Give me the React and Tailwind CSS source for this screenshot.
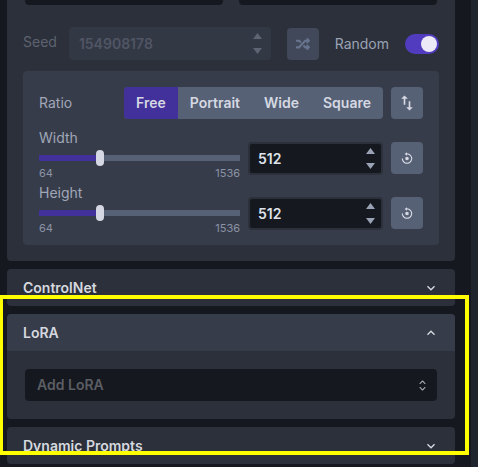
import { useState } from "react";
import { FaRandom } from "react-icons/fa";
import { MdOutlineSwapVert } from "react-icons/md";
import { BiReset } from "react-icons/bi";

function Chevron({ up }) {
  return (
    <svg viewBox="0 0 24 24" className={`size-4 fill-[#d5d8df] ${up ? "rotate-180" : ""}`} aria-hidden="true">
      <path d="M16.59 8.59L12 13.17 7.41 8.59 6 10l6 6 6-6z" />
    </svg>
  );
}

function Steppers({ label, onStep, disabled }) {
  return (
    <div className="flex w-[22px] flex-col">
      <button type="button" aria-label={`Increase ${label}`} disabled={disabled} onClick={() => onStep(1)} className="flex flex-1 items-center justify-center">
        <svg viewBox="0 0 9 6" className="h-1.5 w-[9px] fill-current" aria-hidden="true"><path d="M4.5 0L9 6H0z" /></svg>
      </button>
      <button type="button" aria-label={`Decrease ${label}`} disabled={disabled} onClick={() => onStep(-1)} className="flex flex-1 items-center justify-center">
        <svg viewBox="0 0 9 6" className="h-1.5 w-[9px] fill-current" aria-hidden="true"><path d="M4.5 6L9 0H0z" /></svg>
      </button>
    </div>
  );
}

function Dimension({ label }) {
  const [value, setValue] = useState(512);
  const id = label.toLowerCase();
  const min = 64;
  const max = 1536;
  return (
    <div className="flex items-end gap-2">
      <div className="flex min-w-0 flex-1 flex-col">
        <label htmlFor={id} className="text-sm leading-5 text-[#a0a7b8]">{label}</label>
        <div className="grid h-5 items-center">
          <div className="col-start-1 row-start-1 h-1.5 bg-[#566175]">
            <div className="h-full bg-[#42309b]" style={{ width: `${((value - min) / (max - min)) * 100}%` }} />
          </div>
          <input
            id={id}
            type="range"
            min={min}
            max={max}
            step={8}
            value={value}
            onChange={(e) => setValue(Number(e.target.value))}
            className="z-10 col-start-1 row-start-1 -mx-1 h-4 appearance-none bg-transparent [&::-webkit-slider-thumb]:h-4 [&::-webkit-slider-thumb]:w-2 [&::-webkit-slider-thumb]:appearance-none [&::-webkit-slider-thumb]:rounded-sm [&::-webkit-slider-thumb]:bg-[#d5d8e2]"
          />
        </div>
        <div className="flex justify-between text-[11px] leading-[11px] text-[#8b93a6]">
          <span>{min}</span>
          <span>{max}</span>
        </div>
      </div>
      <div className="mb-1 flex h-[33px] w-[135px] rounded-sm border-2 border-[#2c303a] bg-[#15181f] text-[#9aa3b5]">
        <input
          aria-label={`${label} value`}
          inputMode="numeric"
          value={value}
          onChange={(e) => setValue(Number(e.target.value) || min)}
          className="min-w-0 flex-1 bg-transparent pl-2 text-sm font-semibold text-[#dfe2ea] outline-none"
        />
        <Steppers label={label} onStep={(d) => setValue((v) => v + d * 8)} />
      </div>
      <button type="button" aria-label={`Reset ${label}`} onClick={() => setValue(512)} className="mb-[5px] flex size-8 items-center justify-center rounded bg-[#566175] text-[#d5d8e2]">
        <BiReset className="size-3.5" />
      </button>
    </div>
  );
}

function Section({ title, open, children }) {
  return (
    <section className="overflow-hidden rounded bg-[#2c303a]">
      <button type="button" aria-expanded={Boolean(open)} className={`flex h-[37px] w-full items-center justify-between px-4 text-sm font-semibold text-[#d5d8df] ${open ? "bg-[#373c4a]" : ""}`}>
        {title}
        <Chevron up={open} />
      </button>
      {children}
    </section>
  );
}

const ratios = ["Free", "Portrait", "Wide", "Square"];

export default function App() {
  const [ratio, setRatio] = useState("Free");
  return (
    <div className="relative flex min-h-screen overflow-hidden bg-[#15181f] font-['Inter','Liberation_Sans',sans-serif]">
      <main className="mr-4 ml-[7px] flex min-w-0 flex-1 flex-col gap-2 pb-[3px]">
        <section className="rounded-b bg-[#2c303a] px-4 pb-4">
          <div className="grid grid-cols-2 gap-4 px-0.5">
            <div className="h-[5px] rounded-b-sm bg-[#15181f]" />
            <div className="h-[5px] rounded-b-sm bg-[#15181f]" />
          </div>

          <div className="mt-[22px] flex items-center gap-4">
            <div className="flex min-w-0 flex-1 items-center gap-3">
              <label htmlFor="seed" className="pb-1 text-sm text-[#5d6271]">Seed</label>
              <div className="flex h-[33px] min-w-0 flex-1 rounded border-2 border-[#333845] bg-[#333845] text-[#5e6474]">
                <input id="seed" disabled defaultValue="154908178" className="min-w-0 flex-1 bg-transparent pl-2 text-sm font-semibold text-[#505564]" />
                <Steppers label="Seed" disabled />
              </div>
            </div>
            <button type="button" aria-label="Shuffle seed" disabled className="flex size-8 items-center justify-center rounded bg-[#414859] text-[#68758f]">
              <FaRandom className="size-3.5" />
            </button>
            <label htmlFor="random" className="text-sm text-[#9aa3b5]">Random</label>
            <input
              id="random"
              type="checkbox"
              role="switch"
              defaultChecked
              className="flex h-5 w-[34px] appearance-none rounded-full bg-[#566175] p-0.5 before:size-4 before:rounded-full before:bg-[#edeaf8] checked:justify-end checked:bg-[#513cbf]"
            />
          </div>

          <div className="mt-[11px] flex flex-col rounded bg-[#373c4a] px-4 pt-4 pb-[11px]">
            <div className="flex items-center gap-2">
              <span className="flex-1 text-sm text-[#a0a7b8]">Ratio</span>
              <div className="flex h-8 overflow-hidden rounded bg-[#566175]" role="group" aria-label="Ratio">
                {ratios.map((name) => (
                  <button
                    key={name}
                    type="button"
                    aria-pressed={ratio === name}
                    onClick={() => setRatio(name)}
                    className={`px-3 text-sm font-semibold text-[#d5d8e2] ${ratio === name ? "bg-[#42309b]" : ""}`}
                  >
                    {name}
                  </button>
                ))}
              </div>
              <button type="button" aria-label="Swap width and height" className="flex size-8 items-center justify-center rounded bg-[#566175] text-[#d5d8e2]">
                <MdOutlineSwapVert className="size-5" />
              </button>
            </div>
            <div className="mt-[9px] flex flex-col gap-1">
              <Dimension label="Width" />
              <Dimension label="Height" />
            </div>
          </div>
        </section>

        <Section title="ControlNet" />

        <Section title="LoRA" open>
          <div className="px-[18px] py-[18px]">
            <div className="grid items-center">
              <select aria-label="Add LoRA" className="col-start-1 row-start-1 h-8 w-full appearance-none rounded-sm bg-[#15181f] px-3 text-sm font-semibold text-[#5b5e63]">
                <option>Add LoRA</option>
              </select>
              <svg viewBox="0 0 15 15" className="pointer-events-none z-10 col-start-1 row-start-1 mr-1.5 size-[17px] justify-self-end fill-[#a9adb5]" aria-hidden="true">
                <path fillRule="evenodd" clipRule="evenodd" d="M4.93179 5.43179C4.75605 5.60753 4.75605 5.89245 4.93179 6.06819C5.10753 6.24392 5.39245 6.24392 5.56819 6.06819L7.49999 4.13638L9.43179 6.06819C9.60753 6.24392 9.89245 6.24392 10.0682 6.06819C10.2439 5.89245 10.2439 5.60753 10.0682 5.43179L7.81819 3.18179C7.73379 3.0974 7.61933 3.04999 7.49999 3.04999C7.38064 3.04999 7.26618 3.0974 7.18179 3.18179L4.93179 5.43179ZM10.0682 9.56819C10.2439 9.39245 10.2439 9.10753 10.0682 8.93179C9.89245 8.75606 9.60753 8.75606 9.43179 8.93179L7.49999 10.8636L5.56819 8.93179C5.39245 8.75606 5.10753 8.75606 4.93179 8.93179C4.75605 9.10753 4.75605 9.39245 4.93179 9.56819L7.18179 11.8182C7.35753 11.9939 7.64245 11.9939 7.81819 11.8182L10.0682 9.56819Z" />
              </svg>
            </div>
          </div>
        </Section>

        <Section title="Dynamic Prompts" />
      </main>
      <aside className="w-[7px] bg-[#20242c]" />
      <div className="pointer-events-none absolute top-[295px] right-[9px] -left-px z-20 h-40 border-4 border-[#ffff00]" />
    </div>
  );
}
